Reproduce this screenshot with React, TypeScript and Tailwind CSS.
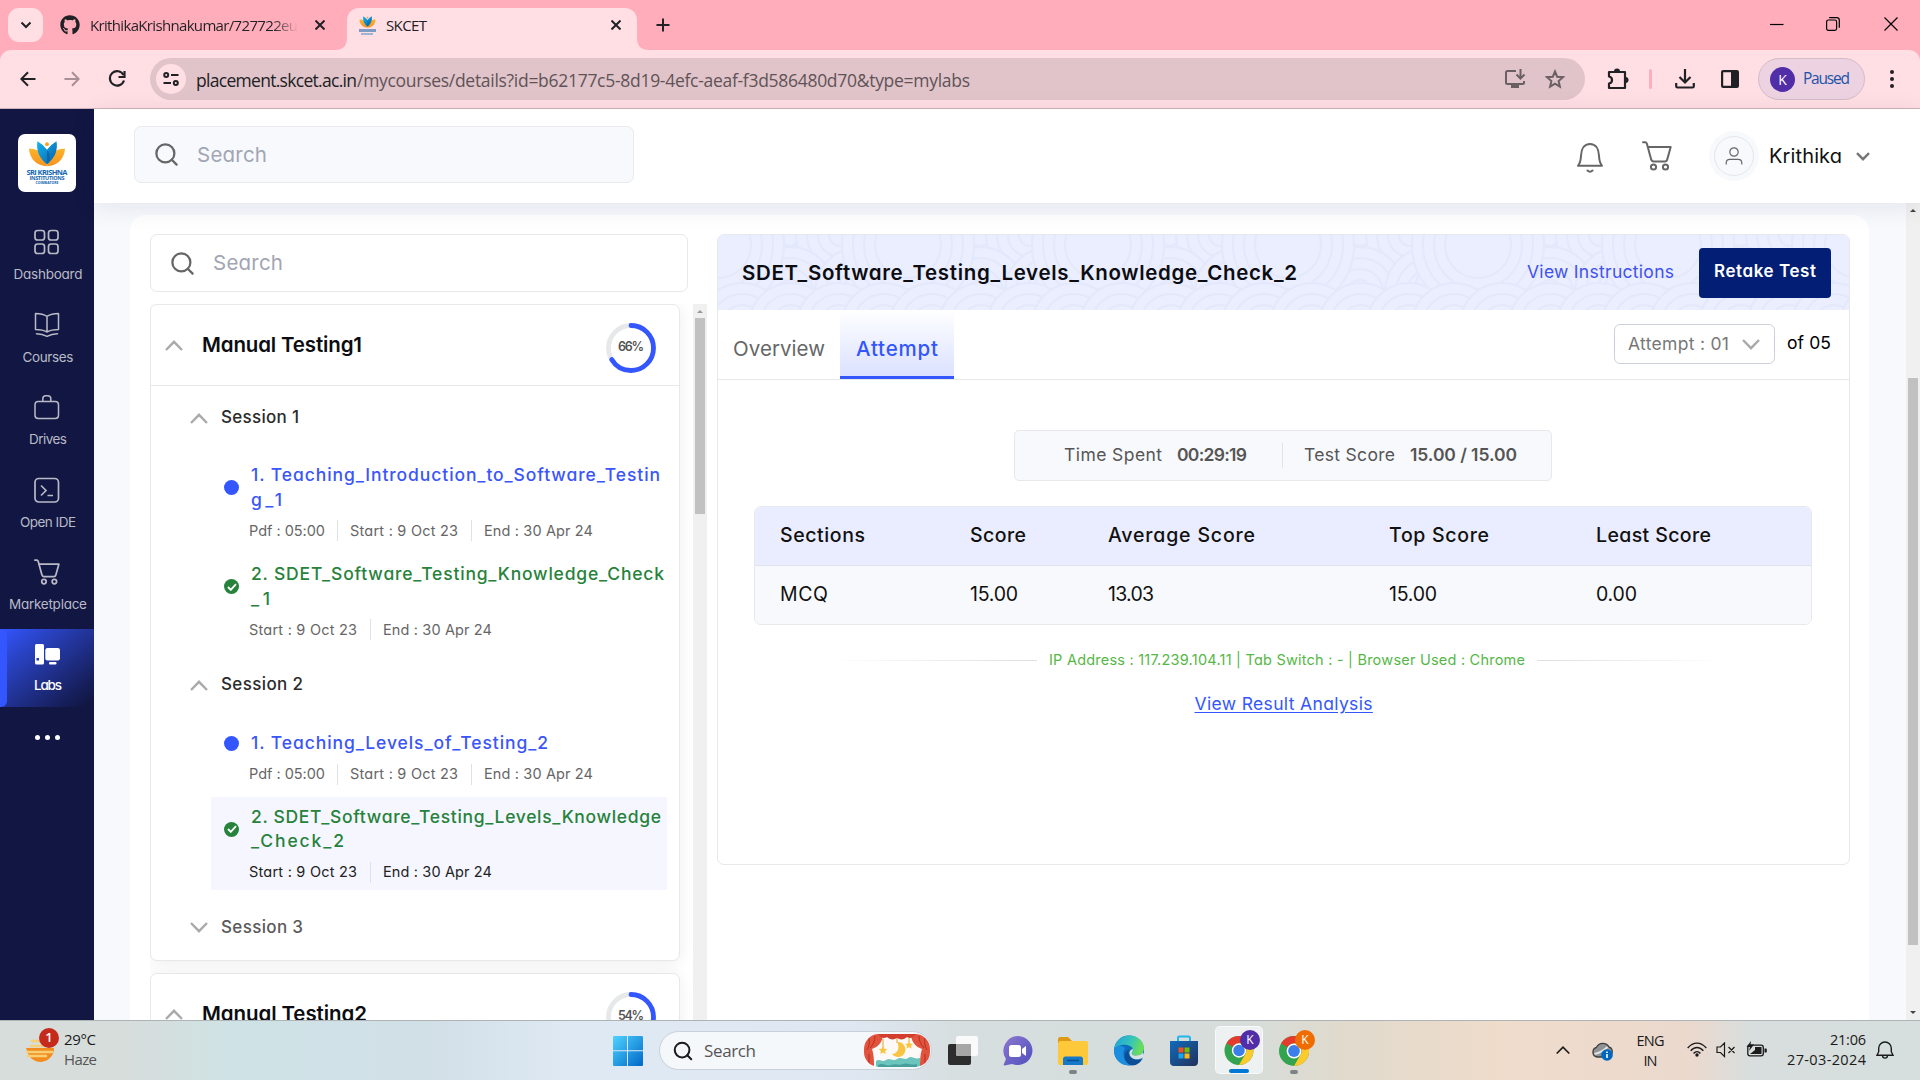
import React, { useLayoutEffect, useRef } from "react";
import { Search, ShoppingCart, SquareTerminal } from "lucide-react";
import { FaGithub } from "react-icons/fa";

/** Single-line text whose tracking is tuned so that it fills exactly `w` pixels. */
function Fit({ w, className = "", children }: { w: number; className?: string; children: string }) {
  const ref = useRef<HTMLSpanElement>(null);
  useLayoutEffect(() => {
    const el = ref.current;
    if (!el) return;
    el.style.letterSpacing = "0px";
    const range = document.createRange();
    range.selectNodeContents(el);
    const natural = range.getBoundingClientRect().width;
    el.style.letterSpacing = `${(w - natural) / Math.max(1, children.length - 1)}px`;
  }, [w, children]);
  return (
    <span ref={ref} className={`block shrink-0 whitespace-nowrap ${className}`} style={{ width: w }}>
      {children}
    </span>
  );
}

function Chevron({ up = false, className = "" }: { up?: boolean; className?: string }) {
  return (
    <svg viewBox="0 0 18 11" className={`h-[11px] w-[18px] shrink-0 ${className}`} fill="none" stroke="currentColor" strokeWidth="2.4">
      <path d={up ? "M1 10 9 1.8 17 10" : "M1 1 9 9.2 17 1"} />
    </svg>
  );
}

function Cart({ className = "" }: { className?: string }) {
  return (
    <svg viewBox="0 0 30 30" className={className} fill="none" stroke="currentColor" strokeWidth="2" strokeLinecap="round" strokeLinejoin="round">
      <path d="M1 1.2h2.2c1 0 1.4.6 1.7 1.6l4.2 15.4c.4 1.4 1.2 2.2 2.6 2.2h11c1.4 0 2.2-.8 2.5-2L28.700 6H5.600" />
      <circle cx="11.500" cy="26" r="2.600" />
      <circle cx="23.500" cy="26" r="2.600" />
    </svg>
  );
}

function Lotus({ className = "" }: { className?: string }) {
  return (
    <svg viewBox="0 0 40 27" className={className}>
      <defs>
        <linearGradient id="petal" x1="0" y1="0" x2="0" y2="1">
          <stop offset="0" stopColor="#fdb32a" />
          <stop offset="1" stopColor="#f7931e" />
        </linearGradient>
        <linearGradient id="core" x1="0" y1="0" x2="1" y2="1">
          <stop offset="0" stopColor="#12b5f0" />
          <stop offset="1" stopColor="#0b5ea8" />
        </linearGradient>
      </defs>
      <path d="M1 8c8-1 18 5 19 18.500C9 26 2 19 1 8Z" fill="url(#petal)" />
      <path d="M39 8c-8-1-18 5-19 18.500C31 26 38 19 39 8Z" fill="url(#petal)" />
      <path d="M10 0l5.500 4L20 9l4.500-5L30 0c1.500 9-1 17-10 24.500C11 17 8.500 9 10 0Z" fill="url(#core)" />
      <path d="M20 9.500C24 12 24 19 20 24Z" fill="#0a4f96" opacity=".5" />
      <circle cx="20" cy="3.200" r="2" fill="#f9a01f" />
    </svg>
  );
}

function BrowserChrome() {
  return (
    <div className="flex h-[109px] shrink-0 flex-col bg-[#ffadbb] font-['Open_Sans',sans-serif] text-[#202124]">
      <div className="flex h-[50px] items-start">
        <button className="mt-2 ml-2 flex h-[34px] w-[35px] items-center justify-center rounded-[11px] bg-[#ffdee4]">
          <svg viewBox="0 0 12 8" className="h-2 w-3" fill="none" stroke="currentColor" strokeWidth="2"><path d="m1.500 1.500 4.500 4.500 4.500-4.500" /></svg>
        </button>
        <div className="ml-[17px] flex h-[50px] items-center">
          <FaGithub className="h-5 w-5" />
          <Fit w={208} className="ml-[10px] bg-gradient-to-r from-[#202124] from-88% to-transparent bg-clip-text text-[15px] text-transparent">KrithikaKrishnakumar/727722eu</Fit>
          <svg viewBox="0 0 10 10" className="ml-[17px] h-[10px] w-[10px]" stroke="currentColor" strokeWidth="2"><path d="m.5.5 9 9m0-9-9 9" /></svg>
        </div>
        <div className="relative mt-2 ml-[22px] flex h-[42px] w-[290px] items-center rounded-t-[12px] bg-[#ffdee4] pb-2">
          <svg viewBox="0 0 12 12" className="absolute bottom-0 -left-3 h-3 w-3 fill-[#ffdee4]"><path d="M12 0v12H0C8 12 12 8 12 0Z" /></svg>
          <svg viewBox="0 0 12 12" className="absolute -right-3 bottom-0 h-3 w-3 fill-[#ffdee4]"><path d="M0 0v12h12C4 12 0 8 0 0Z" /></svg>
          <div className="ml-[11px] flex w-[18px] flex-col items-center">
            <Lotus className="h-3 w-[17px]" />
            <span className="mt-px h-[3px] w-[17px] bg-[#7f9cc4]" />
            <span className="mt-px h-[2px] w-[12px] bg-[#9fb3d2]" />
          </div>
          <Fit w={41} className="ml-[10px] text-[15px]">SKCET</Fit>
          <svg viewBox="0 0 10 10" className="ml-[184px] h-[10px] w-[10px]" stroke="currentColor" strokeWidth="2"><path d="m.5.5 9 9m0-9-9 9" /></svg>
        </div>
        <svg viewBox="0 0 14 14" className="mt-[18px] ml-[19px] h-[14px] w-[14px]" stroke="currentColor" strokeWidth="2"><path d="M7 .5v13M.5 7h13" /></svg>
        <div className="mt-[17px] mr-[22px] ml-auto flex items-center text-black">
          <svg viewBox="0 0 14 14" className="h-[14px] w-[14px]" stroke="currentColor" strokeWidth="1.200"><path d="M0 7.500h13.500" /></svg>
          <svg viewBox="0 0 14 14" className="ml-[42px] h-[14px] w-[14px]" fill="none" stroke="currentColor" strokeWidth="1.200"><rect x=".6" y="3" width="10" height="10.300" rx="1.800" /><path d="M3.200.700h7.500a2.600 2.600 0 0 1 2.600 2.600v7.500" /></svg>
          <svg viewBox="0 0 14 14" className="ml-[44px] h-[14px] w-[14px]" stroke="currentColor" strokeWidth="1.200"><path d="m.5.5 13 13m0-13-13 13" /></svg>
        </div>
      </div>
      <div className="flex h-[59px] items-start rounded-t-[11px] border-b border-[#cfb2b9] bg-[#ffdee4]">
        <svg viewBox="0 0 16 16" className="mt-[21px] ml-5 h-4 w-4" fill="none" stroke="currentColor" strokeWidth="2"><path d="M15.500 8H1.500M8 1.200 1.300 8 8 14.800" /></svg>
        <svg viewBox="0 0 16 16" className="mt-[21px] ml-7 h-4 w-4 text-[#a88f95]" fill="none" stroke="currentColor" strokeWidth="2"><path d="M.5 8h14M8 1.200 14.700 8 8 14.800" /></svg>
        <svg viewBox="0 0 18 18" className="mt-5 ml-7 h-[18px] w-[18px]" fill="none" stroke="currentColor" strokeWidth="2.200"><path d="M15.500 5A7.200 7.200 0 1 0 16 10.500" /><path d="M16.500 1v6h-6" /></svg>
        <div className="mt-2 ml-[24px] flex h-[42px] w-[1435px] items-center rounded-full bg-[#e0c4c9]">
          <div className="ml-[6px] flex h-[30px] w-[30px] items-center justify-center rounded-full bg-[#ffdee4]">
            <svg viewBox="0 0 16 14" className="h-[14px] w-4" fill="none" stroke="currentColor" strokeWidth="2"><circle cx="3.200" cy="3" r="2" /><path d="M8 3h7.500M.5 11H8" /><circle cx="12.800" cy="11" r="2" /></svg>
          </div>
          <Fit w={161} className="mt-[2px] ml-[10px] text-[17.500px]">placement.skcet.ac.in</Fit>
          <Fit w={613} className="mt-[2px] text-[17.500px] text-[#5f5357]">/mycourses/details?id=b62177c5-8d19-4efc-aeaf-f3d586480d70&type=mylabs</Fit>
          <svg viewBox="0 0 22 20" className="mr-[19px] ml-auto h-5 w-[22px] text-[#6a6063]" fill="none" stroke="currentColor" strokeWidth="2"><path d="M12 2H3.500C2.500 2 2 2.500 2 3.500v10c0 1 .5 1.500 1.500 1.500h15c1 0 1.500-.5 1.500-1.500V12M16.500 0v9M12.500 5.500l4 4 4-4" /><path d="M7 17.500h8" strokeWidth="3" /></svg>
          <svg viewBox="0 0 20 20" className="mr-5 h-5 w-5 text-[#6a6063]" fill="none" stroke="currentColor" strokeWidth="2"><path d="m10 2.500 2.200 5.200 5.800.5-4.400 3.800 1.300 5.600L10 14.600l-4.900 3 1.300-5.600L2 8.200l5.800-.5L10 2.500Z" /></svg>
        </div>
        <svg viewBox="0 0 22 22" className="mt-[18px] ml-[22px] h-[22px] w-[22px]"><path d="M2 4h16v16H2v-4.500c4-.5 4-6.500 0-7V4Z" fill="none" stroke="currentColor" strokeWidth="2.200" strokeLinejoin="round" /><path d="M7 3.500a3 3 0 0 1 6 0ZM18.500 9a3 3 0 0 1 0 6Z" fill="currentColor" /></svg>
        <div className="mt-[19px] ml-[20px] h-5 w-[3px] rounded bg-[#ffadbb]" />
        <svg viewBox="0 0 20 20" className="mt-[19px] ml-[23px] h-5 w-5" fill="none" stroke="currentColor" strokeWidth="2.200"><path d="M10 0v13M4.500 8l5.500 5.500L15.500 8M1.200 14v3.200c0 .8.500 1.300 1.300 1.300h15c.8 0 1.300-.5 1.300-1.300V14" /></svg>
        <svg viewBox="0 0 18 18" className="mt-5 ml-[26px] h-[18px] w-[18px]"><rect x="1.100" y="1.100" width="15.800" height="15.800" rx="1" fill="none" stroke="currentColor" strokeWidth="2.200" /><path d="M10 1h7v16h-7z" fill="currentColor" /></svg>
        <div className="mt-2 ml-[19px] flex h-[42px] w-[107px] items-center rounded-full border border-[#d3bcc9] bg-[#edd3e1]">
          <span className="ml-[11px] flex h-[25px] w-[25px] items-center justify-center rounded-full bg-[#512da8] text-[14px] text-white">K</span>
          <Fit w={47} className="ml-2 text-[15.500px] text-[#2152a8]">Paused</Fit>
        </div>
        <svg viewBox="0 0 4 18" className="mt-5 ml-[25px] h-[18px] w-1 fill-current"><circle cx="2" cy="2" r="2" /><circle cx="2" cy="9" r="2" /><circle cx="2" cy="16" r="2" /></svg>
      </div>
    </div>
  );
}

function NavItem({ label, w, children }: { label: string; w: number; children: React.ReactNode }) {
  return (
    <div className="flex h-[82.5px] flex-col items-center text-[#b9bac6]">
      <div className="flex h-[26px] w-[26px] items-center justify-center">{children}</div>
      <Fit w={w} className="mt-[9px] ml-[2px] text-[13.500px] leading-[20px]">{label}</Fit>
    </div>
  );
}

function Sidebar() {
  return (
    <div className="flex w-[94px] shrink-0 flex-col bg-[#111642]">
      <div className="mx-auto mt-[25px] flex h-[58px] w-[58px] shrink-0 flex-col items-center rounded-[7px] bg-white pt-[7px] font-['Open_Sans',sans-serif] font-bold text-[#1567b1]">
        <Lotus className="h-[26px] w-[38px] shrink-0" />
        <Fit w={41} className="mt-[2px] text-[7.500px] leading-[7px]">SRI KRISHNA</Fit>
        <Fit w={35} className="text-[5.500px] leading-[5px]">INSTITUTIONS</Fit>
        <Fit w={23} className="text-[3.500px] leading-[4px]">COIMBATORE</Fit>
      </div>
      <div className="mt-[37px] flex flex-col">
        <NavItem label="Dashboard" w={69}>
          <svg viewBox="0 0 26 26" className="h-[26px] w-[26px]" fill="none" stroke="currentColor" strokeWidth="1.700"><rect x="1" y="1.500" width="9.500" height="9.500" rx="2.600" /><rect x="14.500" y="1.500" width="9.500" height="9.500" rx="2.600" /><rect x="1" y="15" width="9.500" height="9.500" rx="2.600" /><rect x="14.500" y="15" width="9.500" height="9.500" rx="2.600" /></svg>
        </NavItem>
        <NavItem label="Courses" w={51}>
          <svg viewBox="0 0 26 26" className="h-[26px] w-[26px]" fill="none" stroke="currentColor" strokeWidth="1.500" strokeLinecap="round" strokeLinejoin="round"><path d="M1.500 1.500c4 0 8 .5 11.500 2.800 3.500-2.300 7.500-2.800 11.500-2.800v16c-4 0-8 .5-11.500 2.500-3.500-2-7.500-2.500-11.500-2.500v-16ZM13 4.500V20M2.500 21.800c4 0 7 .6 10.500 2.600 3.500-2 6.500-2.600 10.500-2.600" /></svg>
        </NavItem>
        <NavItem label="Drives" w={38}>
          <svg viewBox="0 0 26 26" className="h-[26px] w-[26px]" fill="none" stroke="currentColor" strokeWidth="1.500"><rect x="1" y="7.500" width="23.500" height="17" rx="3.200" /><path d="M8.800 7.500V4.800c0-2 1-3 3-3h2c2 0 3 1 3 3v2.700" /></svg>
        </NavItem>
        <NavItem label="Open IDE" w={56}>
          <svg viewBox="0 0 26 26" className="h-[26px] w-[26px]" fill="none" stroke="currentColor" strokeWidth="1.700"><rect x="1" y="1.500" width="23.500" height="23.500" rx="3.800" /><path d="m7 8.500 5 5-5 5M13.500 18.500H19" /></svg>
        </NavItem>
        <NavItem label="Marketplace" w={78}>
          <Cart className="h-[26px] w-[26px]" />
        </NavItem>
      </div>
      <div className="mt-[-13px] flex h-[78px] shrink-0 bg-gradient-to-br from-[#3356ff] to-[#111642] to-95%">
        <div className="h-full w-[7px] rounded-r-[6px] bg-[#3356ff]" />
        <div className="flex w-[80px] flex-col items-center pt-[15px]">
          <svg viewBox="0 0 25 21" className="h-[21px] w-[25px] fill-white"><path fillRule="evenodd" d="M1.500 0h6A1.500 1.500 0 0 1 9 1.500v17.500A1.500 1.500 0 0 1 7.500 20.500h-6A1.500 1.500 0 0 1 0 19V1.500A1.500 1.500 0 0 1 1.500 0ZM1.500 14v2.500H4V14Z" /><rect x="10.300" y="4" width="14.700" height="12.500" rx="2.200" /><rect x="14" y="18" width="7.500" height="2.400" rx="1" /></svg>
          <Fit w={28} className="mt-[10px] ml-[2px] text-[13.500px] leading-[20px] font-medium text-white">Labs</Fit>
        </div>
      </div>
      <div className="mt-[28px] ml-[35px] flex gap-[5px]">
        <span className="h-[5px] w-[5px] rounded-full bg-white" />
        <span className="h-[5px] w-[5px] rounded-full bg-white" />
        <span className="h-[5px] w-[5px] rounded-full bg-white" />
      </div>
    </div>
  );
}

function SiteHeader() {
  return (
    <div className="relative z-10 flex h-[94px] shrink-0 items-start bg-white pl-10 shadow-[0_4px_24px_rgba(20,22,60,0.09)]">
      <div className="mt-[17px] flex h-[57px] w-[500px] items-center rounded-[7px] border border-[#e9eaec] bg-[#f8f9fd]">
        <Search className="ml-[18px] h-[27px] w-[27px] text-[#666]" strokeWidth={2} />
        <Fit w={70} className="mt-px ml-[17px] text-[20.500px] text-[#a1a6b3]">Search</Fit>
      </div>
      <svg viewBox="0 0 26 30" className="mt-[34px] ml-auto h-[30px] w-[26px] text-[#666]" fill="none" stroke="currentColor" strokeWidth="2" strokeLinecap="round" strokeLinejoin="round"><path d="M1 22.800h24c-2.200-2.500-2.800-5.500-3-10C21.800 5.500 18.500 1 13 1S4.200 5.500 4 12.800c-.2 4.500-.8 7.500-3 10ZM10.500 27.500c1.500 1.500 3.500 1.500 5 0" /></svg>
      <Cart className="mt-[32px] ml-[39px] h-[30px] w-[30px] text-[#666]" />
      <div className="mt-[22px] ml-[37px] flex h-[50px] w-[50px] items-center justify-center rounded-full bg-[#f8f9fd]">
        <div className="flex h-10 w-10 items-center justify-center rounded-full border border-[#e4e6e9]">
          <svg viewBox="0 0 18 18" className="h-[18px] w-[18px] text-[#666]" fill="none" stroke="currentColor" strokeWidth="1.200"><circle cx="9" cy="5" r="4.200" /><path d="M1.200 17.500v-1.500c0-2.500 1.500-3.700 3.700-3.700h8.200c2.200 0 3.700 1.200 3.700 3.700v1.500" /></svg>
        </div>
      </div>
      <Fit w={73} className="mt-[33px] ml-[10px] text-[20px] leading-7 text-[#111]">Krithika</Fit>
      <svg viewBox="0 0 14 9" className="mt-[43px] mr-[50px] ml-[14px] h-[9px] w-[14px] text-[#777]" fill="none" stroke="currentColor" strokeWidth="2.400"><path d="m1 1.200 6 6 6-6" /></svg>
    </div>
  );
}

function Ring({ pct }: { pct: number }) {
  const c = 2 * Math.PI * 22.5;
  return (
    <div className="relative flex h-[50px] w-[50px] items-center justify-center">
      <svg viewBox="0 0 50 50" className="absolute inset-0 h-[50px] w-[50px] -rotate-90" fill="none" strokeWidth="4.800">
        <circle cx="25" cy="25" r="22.500" stroke="#e6e8ea" />
        <circle cx="25" cy="25" r="22.500" stroke="#3356ff" strokeLinecap="round" strokeDasharray={`${(c * pct) / 100} ${c}`} />
      </svg>
      <Fit w={26} className="relative text-[12.500px] font-semibold text-[#555]">{`${pct}%`}</Fit>
    </div>
  );
}

function ModuleHeader({ title, w, pct }: { title: string; w: number; pct: number }) {
  return (
    <div className="flex h-[81px] shrink-0 items-center border-b border-[#e6e8ea]">
      <Chevron up className="mt-px ml-[14px] text-[#aaa]" />
      <Fit w={w} className="ml-[19px] text-[20.500px] font-semibold text-[#0b0d12]">{title}</Fit>
      <div className="mt-[5px] mr-[23px] ml-auto"><Ring pct={pct} /></div>
    </div>
  );
}

function SessionRow({ n, open = true }: { n: number; open?: boolean }) {
  return (
    <div className="flex h-6 items-center pl-[39px]">
      <Chevron up={open} className="text-[#aaa]" />
      <Fit w={n === 1 ? 78 : 82} className={`ml-[13px] text-[17px] font-medium ${open ? "text-[#2b2b2b]" : "text-[#5a5a5a]"}`}>{`Session ${n}`}</Fit>
    </div>
  );
}

type Line = [string, number];

function Lesson({ done = false, active = false, lines, pdf = false, className = "" }: { done?: boolean; active?: boolean; lines: Line[]; pdf?: boolean; className?: string }) {
  return (
    <div className={`ml-[60px] w-[456px] ${active ? "bg-[#f5f6ff]" : ""} ${className}`}>
      <div className="flex items-center">
        <span className={`ml-[13px] flex h-[15px] w-[15px] items-center justify-center rounded-full ${done ? "bg-[#27823b]" : "bg-[#3356ff]"}`}>
          {done && <svg viewBox="0 0 10 8" className="h-2 w-[10px]" fill="none" stroke="white" strokeWidth="1.900"><path d="m1 4 2.800 2.800L9 1.200" /></svg>}
        </span>
        <div className={`ml-[12px] text-[17.500px] leading-[24.500px] font-medium ${done ? "text-[#27823b]" : "text-[#3a55fa]"}`}>
          {lines.map(([t, w]) => <Fit key={t} w={w}>{t}</Fit>)}
        </div>
      </div>
      <div className={`mt-2 ml-[38px] flex h-[21px] items-center text-[14.500px] ${active ? "text-[#222]" : "text-[#666]"}`}>
        {pdf && <Fit w={76} className="mr-[12px]">Pdf : 05:00</Fit>}
        {pdf && <span className="mr-[12px] h-[21px] w-px bg-[#dfe1e6]" />}
        <Fit w={108}>Start : 9 Oct 23</Fit>
        <span className="mx-[12.500px] h-[21px] w-px bg-[#dfe1e6]" />
        <Fit w={109}>End : 30 Apr 24</Fit>
      </div>
    </div>
  );
}

function CourseTree() {
  return (
    <div className="flex w-[557px] shrink-0 flex-col">
      <div className="flex h-[58px] w-[538px] shrink-0 items-center rounded-[7px] border border-[#e6e8ea] bg-white">
        <Search className="ml-[18px] h-[27px] w-[27px] text-[#666]" strokeWidth={2} />
        <Fit w={70} className="ml-[17px] text-[20.500px] text-[#a1a6b3]">Search</Fit>
      </div>
      <div className="mt-3 flex min-h-0 flex-1 overflow-hidden">
        <div className="flex w-[543px] flex-col overflow-hidden">
          <div className="h-[657px] w-[530px] shrink-0 rounded-[7px] border border-[#e6e8ea] bg-white shadow-[0_2px_16px_rgba(0,0,0,0.07)]">
            <ModuleHeader title="Manual Testing1" w={160} pct={66} />
            <div className="mt-5"><SessionRow n={1} /></div>
            <Lesson className="mt-[33px]" pdf lines={[["1. Teaching_Introduction_to_Software_Testin", 409], ["g_1", 31]]} />
            <Lesson className="mt-[21px]" done lines={[["2. SDET_Software_Testing_Knowledge_Check", 413], ["_1", 19]]} />
            <div className="mt-[33px]"><SessionRow n={2} /></div>
            <Lesson className="mt-[34px]" pdf lines={[["1. Teaching_Levels_of_Testing_2", 297]]} />
            <Lesson className="mt-[12px] h-[93px] pt-[8px]" done active lines={[["2. SDET_Software_Testing_Levels_Knowledge", 410], ["_Check_2", 93]]} />
            <div className="mt-[26px]"><SessionRow n={3} open={false} /></div>
          </div>
          <div className="mt-3 h-[300px] w-[530px] shrink-0 rounded-[7px] border border-[#e6e8ea] bg-white shadow-[0_2px_16px_rgba(0,0,0,0.07)]">
            <ModuleHeader title="Manual Testing2" w={165} pct={54} />
          </div>
        </div>
        <div className="flex w-[14px] flex-col items-center bg-[#f0f0f0]">
          <span className="mt-[6px] h-0 w-0 border-x-[3px] border-b-[3px] border-x-transparent border-b-[#999]" />
          <span className="mt-[5px] h-[196px] w-[10px] bg-[#c1c1c1]" />
        </div>
      </div>
    </div>
  );
}

/** Overlapping fan-shaped arcs, repeated along the banner. */
function WavePattern() {
  const fan = (cx: number, cy: number, radii: number[]) => (
    <g key={`${cx}-${cy}`}>
      {radii.map((r) => <circle key={r} cx={cx} cy={cy} r={r} />)}
    </g>
  );
  const tops = [-2, 22, 72, 122, 188];
  const mids = [-48, -18, 22, 72, 142, 172];
  return (
    <svg className="absolute inset-0 h-full w-full">
      <defs>
        <pattern id="waves" width="190" height="76" patternUnits="userSpaceOnUse" fill="#ebeeff" stroke="#e4e8fb" strokeWidth="2">
          {tops.map((x) => fan(x, 0, [44, 33, 22, 11]))}
          {mids.map((x) => fan(x, 57, [45, 34, 23, 12]))}
          {fan(190, 10, [66, 55, 44, 33])}
          {fan(0, 10, [66, 55, 44, 33])}
          {[-24, 24, 73, 121, 166, 214].map((x) => fan(x, 90, [42, 31, 20]))}
        </pattern>
      </defs>
      <rect width="100%" height="100%" fill="#ebeeff" />
      <rect width="100%" height="100%" fill="url(#waves)" />
    </svg>
  );
}

const headCells: Line[] = [["Sections", 85], ["Score", 56], ["Average Score", 147], ["Top Score", 100], ["Least Score", 115]];
const bodyCells: Line[] = [["MCQ", 48], ["15.00", 48], ["13.03", 46], ["15.00", 48], ["0.00", 41]];

function TestPanel() {
  return (
    <div className="ml-[10px] h-[631px] w-[1133px] shrink-0 rounded-[7px] border border-[#e6e8ea] bg-white">
      <div className="relative flex h-[75px] items-center overflow-hidden rounded-t-[6px]">
        <WavePattern />
        <Fit w={555} className="relative mt-[2px] ml-[24px] text-[20.500px] font-semibold text-[#0b0d12]">SDET_Software_Testing_Levels_Knowledge_Check_2</Fit>
        <Fit w={147} className="relative mr-[25px] ml-auto text-[17.500px] text-[#3f51f0]">View Instructions</Fit>
        <div className="relative mr-[18px] flex h-[50px] w-[132px] items-center justify-center rounded-[4px] bg-[#021f75] pb-[2px] font-semibold text-white">
          <Fit w={102} className="text-[17px]">Retake Test</Fit>
        </div>
      </div>
      <div className="flex h-[70px] border-b border-[#e6e8ea]">
        <Fit w={92} className="mt-[24px] ml-[15px] text-[20.500px] leading-[30px] text-[#666]">Overview</Fit>
        <div className="ml-[15px] flex h-[69px] w-[114px] justify-center border-b-[3px] border-[#3356ff] bg-gradient-to-b from-white to-[#dbe1ff]">
          <Fit w={82} className="mt-[24px] text-[20.500px] leading-[30px] font-medium text-[#3356ff]">Attempt</Fit>
        </div>
        <div className="mt-[14px] ml-auto flex h-10 w-[161px] items-center rounded-[6px] border border-[#cdd2da] text-[#777]">
          <Fit w={101} className="ml-[13px] text-[17.500px]">Attempt : 01</Fit>
          <Chevron className="ml-[13px] text-[#aaa]" />
        </div>
        <Fit w={44} className="mt-[18px] mr-[18px] ml-[12px] text-[17.500px] leading-[30px] text-black">of 05</Fit>
      </div>
      <div className="ml-[296px] mt-[50px] flex h-[51px] w-[538px] items-center rounded-[5px] border border-[#e6e8ea] bg-[#f8f9fd] text-[17.500px] text-[#555]">
        <Fit w={98} className="ml-[49px]">Time Spent</Fit>
        <Fit w={70} className="ml-[15px] font-semibold">00:29:19</Fit>
        <span className="ml-[35px] h-[25px] w-px bg-[#e2e4e8]" />
        <Fit w={91} className="ml-[21px]">Test Score</Fit>
        <Fit w={107} className="ml-[15px] font-semibold">15.00 / 15.00</Fit>
      </div>
      <div className="mt-[25px] ml-[36px] w-[1058px] overflow-hidden rounded-[7px] border border-[#e6e8ea] text-[19.500px] text-[#111]">
        <div className="grid h-[59px] grid-cols-[190px_138px_281px_207px_1fr] items-center border-b border-[#e1e3ea] bg-[#eaedff] pl-[25px] font-medium">
          {headCells.map(([t, w]) => <Fit key={t} w={w}>{t}</Fit>)}
        </div>
        <div className="grid h-[58px] grid-cols-[190px_138px_281px_207px_1fr] items-center bg-[#f8f9fd] pl-[25px]">
          {bodyCells.map(([t, w], i) => <Fit key={i} w={w}>{t}</Fit>)}
        </div>
      </div>
      <div className="mt-[25px] ml-[110px] flex items-center text-[14.500px] leading-[20px] text-[#55b746]">
        <span className="h-px w-[209px] bg-gradient-to-r from-transparent to-[#dcdee0]" />
        <Fit w={476} className="mx-[12px]">IP Address : 117.239.104.11 | Tab Switch : - | Browser Used : Chrome</Fit>
        <span className="h-px w-[189px] bg-gradient-to-l from-transparent to-[#dcdee0]" />
      </div>
      <div className="mt-[21px] flex justify-center text-[17.500px] text-[#3356ff]">
        <Fit w={178} className="underline underline-offset-2">View Result Analysis</Fit>
      </div>
    </div>
  );
}

function ChromeIcon() {
  return (
    <svg viewBox="0 0 30 30" className="h-[30px] w-[30px]">
      <circle cx="15" cy="15" r="15" fill="#33a34f" />
      <path d="M15 0a15 15 0 0 1 13 7.500H15a7.500 7.500 0 0 0-6.500 3.700L2 7.500A15 15 0 0 1 15 0Z" fill="#e33b2e" />
      <path d="M28 7.500A15 15 0 0 1 15 30l6.500-11.200A7.500 7.500 0 0 0 21.500 11L15 7.500Z" fill="#fccb2b" />
      <circle cx="15" cy="15" r="7.400" fill="white" />
      <circle cx="15" cy="15" r="5.900" fill="#3b7de9" />
    </svg>
  );
}

function Taskbar() {
  return (
    <div className="relative z-20 flex h-[60px] shrink-0 items-start border-t border-[#aeb4b6] bg-[linear-gradient(90deg,#d7dddb_0px,#d6dddb_130px,#cee3e6_240px,#d1dfe7_430px,#dfe9f4_570px,#dfe8f2_850px,#d6dedf_960px,#d6dddb_1240px,#e0dacd_1340px,#efdccb_1500px,#ebd9ce_1690px,#d8dedd_1750px,#d6dede_1920px)] font-['Open_Sans',sans-serif] text-[#1b1b1b]">
      <div className="relative mt-[7px] ml-[25px] h-9 w-[30px]">
        <svg viewBox="0 0 30 36" className="h-9 w-[30px]" fill="none" strokeLinecap="round">
          <path d="M1 20h28a13.500 13.500 0 0 1-26.500 4Z" fill="#f28c1e" />
          <path d="M7 13h12M6 18h12M2 24h25M3 28h18" stroke="#f8cf76" strokeWidth="2.600" />
        </svg>
        <span className="absolute top-0 left-[14px] flex h-5 w-5 items-center justify-center rounded-full bg-[#c42b1c] text-[13px] font-semibold text-white">1</span>
      </div>
      <div className="mt-[8px] ml-[9px] flex w-10 flex-col text-[15px] leading-5">
        <Fit w={32}>29°C</Fit>
        <Fit w={33} className="text-[#555]">Haze</Fit>
      </div>
      <svg viewBox="0 0 30 30" className="mt-[15px] ml-[509px] h-[30px] w-[30px]">
        <defs><linearGradient id="win" x1="0" y1="0" x2="1" y2="1"><stop offset="0" stopColor="#4fd3ff" /><stop offset="1" stopColor="#0067c8" /></linearGradient></defs>
        <path d="M1.500 0H14v14.300H0V1.500C0 .5.500 0 1.500 0ZM15 0h13.500C29.500 0 30 .5 30 1.500v12.800H15ZM0 15.300h14V30H1.500C.5 30 0 29.500 0 28.500ZM15 15.300h15v13.200c0 1-.5 1.500-1.500 1.500H15Z" fill="url(#win)" />
      </svg>
      <div className="mt-[10px] ml-[16px] flex h-[39px] w-[273px] items-center rounded-full border border-[#c8d0da] bg-[#f5f8fb]">
        <Search className="ml-[12px] h-[22px] w-[22px]" strokeWidth={2.2} />
        <Fit w={52} className="ml-[10px] text-[17px] text-[#555]">Search</Fit>
        <svg viewBox="0 0 66 33" className="ml-[108px] h-[33px] w-[66px]">
          <defs><clipPath id="pill"><rect width="66" height="33" rx="15" /></clipPath></defs>
          <g clipPath="url(#pill)">
            <rect width="66" height="33" fill="#fdf9f6" />
            <path d="M12 27c4-3 6 2 10-1s6 2 11-1 7 2 11-1 6 2 12 0v10H12Z" fill="#6cc5bd" />
            <path d="M14 31c6-3 8 2 13 0s8 1 12-1 8 2 14 0v6H14Z" fill="#459f9b" />
            <path d="M0 0h19c0 8-5 13-11 15 2 6 2 12 2 18H0ZM66 0H47c0 8 5 13 11 15-2 6-2 12-2 18h10Z" fill="#e2533d" />
            <path d="M14 0h38c-3 4-6 5-9 3-3 3-7 3-10 1-3 2-7 2-10-1-3 2-6 1-9-3Z" fill="#d23f2e" />
            <path d="M5 4c1 5 0 8-2 12M11 2c0 5-2 9-5 12M61 4c-1 5 0 8 2 12M55 2c0 5 2 9 5 12M5 20v13M61 20v13" stroke="#b5301f" fill="none" />
            <path d="M19 5v9M33 4v5M45 4v4" stroke="#e0a630" />
            <path d="M33 8a7.500 7.500 0 1 1-5 12c6 0 8-7 5-12Z" fill="#f8c442" />
            <path d="m19 12 1.300 2.700 3 .4-2.200 2 .6 3-2.700-1.500-2.700 1.500.6-3-2.200-2 3-.4ZM45 7l1.200 2.500 2.800.4-2 1.900.5 2.800-2.500-1.400-2.500 1.400.5-2.800-2-1.900 2.800-.4Z" fill="#f8c442" />
          </g>
        </svg>
      </div>
      <svg viewBox="0 0 30 30" className="mt-[15px] ml-[16px] h-[30px] w-[30px]">
        <rect y="8" width="23" height="21" rx="2" fill="#2d2d2d" /><rect x="8" width="22" height="20" rx="2" fill="#fafafa" /><path d="M8 8h15v12H10a2 2 0 0 1-2-2Z" fill="#a7a7a7" />
      </svg>
      <svg viewBox="0 0 30 30" className="mt-[15px] ml-[25px] h-[30px] w-[30px]">
        <defs><linearGradient id="chat" x1="0" y1="0" x2="1" y2="1"><stop offset="0" stopColor="#8d76d0" /><stop offset="1" stopColor="#4e50bd" /></linearGradient></defs>
        <path d="M15 0a15 14.500 0 1 1-6 28l-7.500 1.500c-.8 0-1-.5-.7-1.200L3 23A14.700 14.700 0 0 1 15 0Z" fill="url(#chat)" />
        <rect x="6" y="9" width="12" height="12" rx="2.500" fill="white" /><path d="m19 13 4-3v10l-4-3Z" fill="white" />
      </svg>
      <div className="ml-[25px] flex flex-col items-center">
        <svg viewBox="0 0 30 28" className="mt-[16px] h-7 w-[30px]">
          <path d="M0 2c0-1 .8-2 2-2h8l4 4v5H0Z" fill="#dd9a12" /><path d="M2 4h26c1.200 0 2 .8 2 2v20c0 1.200-.8 2-2 2H2c-1.200 0-2-.8-2-2V6Z" fill="#fdc93a" /><path d="M5 28v-6c0-1.500 1-2.500 2.500-2.500h15c1.500 0 2.500 1 2.500 2.500v6Z" fill="#1678c8" /><path d="M9 23.500h12" stroke="#0b4f91" strokeWidth="1.500" />
        </svg>
        <span className="mt-[5px] h-1 w-2 rounded-full bg-[#7c8285]" />
      </div>
      <svg viewBox="0 0 30 31" className="mt-[14px] ml-[26px] h-[31px] w-[30px]">
        <defs><linearGradient id="edge" x1="0" y1="0" x2="1" y2=".3"><stop offset="0" stopColor="#1e9fe0" /><stop offset=".6" stopColor="#36c5b8" /><stop offset="1" stopColor="#6bdc5b" /></linearGradient></defs>
        <circle cx="15" cy="15.500" r="15" fill="#0f6cbd" />
        <path d="M0 15C1 6 7 .5 15 .5c9 0 15 6 15 12.500 0 5-3.500 7.500-8 7.500-3.500 0-5-1.500-4-3 .8-1.300 1-2 .8-3.500C18 9.500 5 7 0 15Z" fill="url(#edge)" />
        <path d="M11 13c-4 6 0 15 8 16.500C9 33 0 25 0 16c2-5 7-6.500 11-3Z" fill="#1b8ee0" />
        <path d="M15.500 14c-3 4 1 11 8 11 3 0 4.500-1 5.500-2-2 4-6 7.500-11 7.500-8-2-11-12-2.500-16.500Z" fill="#0c4f96" />
        <path d="M18.800 14c.2 1.500 0 2.200-.8 3.500-1 1.500.5 3 4 3 3 0 5.500-1 7-3.200l1 3.700-3 2.500c-5 2-10.500.5-11.500-4.500-.4-2 .8-4.200 3.300-5Z" fill="#d9e2e2" />
      </svg>
      <svg viewBox="0 0 30 31" className="mt-[14px] ml-[25px] h-[31px] w-[30px]">
        <defs><linearGradient id="store" x1="0" y1="0" x2="1" y2="1"><stop offset="0" stopColor="#0f6cbd" /><stop offset="1" stopColor="#22305a" /></linearGradient></defs>
        <path d="M9 7V3c0-1 .6-1.600 1.600-1.600h8.800c1 0 1.600.6 1.600 1.600v4" fill="none" stroke="#22b5ee" strokeWidth="2" />
        <path d="M1 6h28v21c0 2.500-1.500 4-4 4H5c-2.500 0-4-1.500-4-4Z" fill="url(#store)" />
        <path d="M9.500 12.500h5v5h-5z" fill="#f05023" /><path d="M15.500 12.500h5v5h-5z" fill="#7eb900" /><path d="M9.500 18.500h5v5h-5z" fill="#16a5ee" /><path d="M15.500 18.500h5v5h-5z" fill="#feb813" />
      </svg>
      <div className="relative mt-[5px] ml-[16px] flex h-[48px] w-[48px] flex-col items-center rounded-[5px] border border-white/60 bg-[#eef1f1] pt-[9px]">
        <ChromeIcon />
        <span className="mt-[4px] h-1 w-5 shrink-0 rounded-full bg-[#0078d4]" />
        <span className="absolute top-[3px] left-[24px] flex h-5 w-5 items-center justify-center rounded-full bg-[#512da8] text-[12px] text-white">K</span>
      </div>
      <div className="relative ml-[16px] flex flex-col items-center pt-[15px]">
        <ChromeIcon />
        <span className="mt-[4px] h-1 w-2 rounded-full bg-[#7c8285]" />
        <span className="absolute top-[9px] left-[16px] flex h-5 w-5 items-center justify-center rounded-full bg-[#ef6c00] text-[12px] text-white">K</span>
      </div>
      <svg viewBox="0 0 14 8" className="mt-[25px] mr-[22px] ml-auto h-2 w-[14px]" fill="none" stroke="currentColor" strokeWidth="1.600"><path d="m.7 7.500 6.300-6.300 6.300 6.300" /></svg>
      <svg viewBox="0 0 22 19" className="mt-[21px] mr-[22px] h-[19px] w-[22px]">
        <path d="M5 15a5 5 0 0 1-.5-9.700A7 7 0 0 1 17 5a4.500 4.500 0 0 1 2 7.500V15Z" fill="#8f9394" stroke="#3c3f40" strokeWidth="1.300" /><path d="M2.500 12c5-1 9-3 13-7" stroke="#e3e4e5" strokeWidth="2" fill="none" />
        <circle cx="15" cy="13" r="5.800" fill="#0067c0" /><path d="M15 12v4M15 9.500v1.500" stroke="white" strokeWidth="1.600" />
      </svg>
      <div className="mt-[10px] mr-[22px] flex w-[29px] flex-col items-center text-[14.500px] leading-5">
        <Fit w={28}>ENG</Fit>
        <Fit w={14}>IN</Fit>
      </div>
      <svg viewBox="0 0 20 15" className="mt-[21px] mr-[9px] h-[15px] w-5" fill="none" stroke="currentColor" strokeWidth="1.400"><path d="M.7 6c5.500-6.500 13-6.500 18.600 0M3.700 8.800c3.700-4.500 8.900-4.500 12.600 0M6.600 11.500c2-2.500 4.800-2.500 6.800 0" /><circle cx="10" cy="13" r="1.700" fill="currentColor" stroke="none" /></svg>
      <svg viewBox="0 0 20 16" className="mt-[21px] mr-[10px] h-4 w-5" fill="none" stroke="currentColor" strokeWidth="1.200"><path d="M1 5h3.500L8.500 1v13.500l-4-4H1V5ZM12.500 5l6 6m0-6-6 6" /></svg>
      <svg viewBox="0 0 21 16" className="mt-[20px] mr-[20px] h-4 w-[21px]"><rect x="1.800" y="4.200" width="15.500" height="10.600" rx="2.200" fill="none" stroke="currentColor" strokeWidth="1.300" /><path d="M9 6h6.500v7H4l5-4ZM18.500 7.500H20c.6 0 .8.300.8.800v2.500c0 .5-.2.800-.8.800h-1.500ZM5 0 .5 6H4L3 10l5-6.500H4.500Z" fill="currentColor" /></svg>
      <div className="mt-[9px] flex w-[79px] flex-col items-end text-[14.500px] leading-5">
        <Fit w={36}>21:06</Fit>
        <Fit w={79}>27-03-2024</Fit>
      </div>
      <svg viewBox="0 0 18 19" className="mt-[20px] mr-[26px] ml-[10px] h-[19px] w-[18px]" fill="none" stroke="currentColor" strokeWidth="1.400"><path d="M1 14.200h16l-1.700-3.500V7A6.200 6.200 0 0 0 9 1a6.200 6.200 0 0 0-6.300 6v3.700L1 14.200ZM6.500 14.500c.2 3.500 4.800 3.500 5 0" /></svg>
    </div>
  );
}

export default function App() {
  return (
    <div className="flex h-[1080px] w-[1920px] flex-col overflow-hidden bg-[#f8f9fd]">
      <BrowserChrome />
      <div className="flex min-h-0 flex-1 font-['Inter',sans-serif] [font-feature-settings:'cv11']">
        <Sidebar />
        <div className="flex min-w-0 flex-1 flex-col">
          <SiteHeader />
          <div className="flex min-h-0 flex-1">
            <div className="mt-3 ml-9 flex w-[1739px] rounded-t-[16px] bg-white pt-[19px] pl-5">
              <CourseTree />
              <TestPanel />
            </div>
            <div className="ml-auto flex w-[14px] flex-col items-center bg-[#f0f0f0]">
              <span className="mt-[6px] h-0 w-0 border-x-[3px] border-b-[3px] border-x-transparent border-b-[#444]" />
              <span className="mt-[166px] h-[567px] w-[10px] bg-[#c1c1c1]" />
              <span className="mt-auto mb-[6px] h-0 w-0 border-x-[3px] border-t-[3px] border-x-transparent border-t-[#444]" />
            </div>
          </div>
        </div>
      </div>
      <Taskbar />
    </div>
  );
}
